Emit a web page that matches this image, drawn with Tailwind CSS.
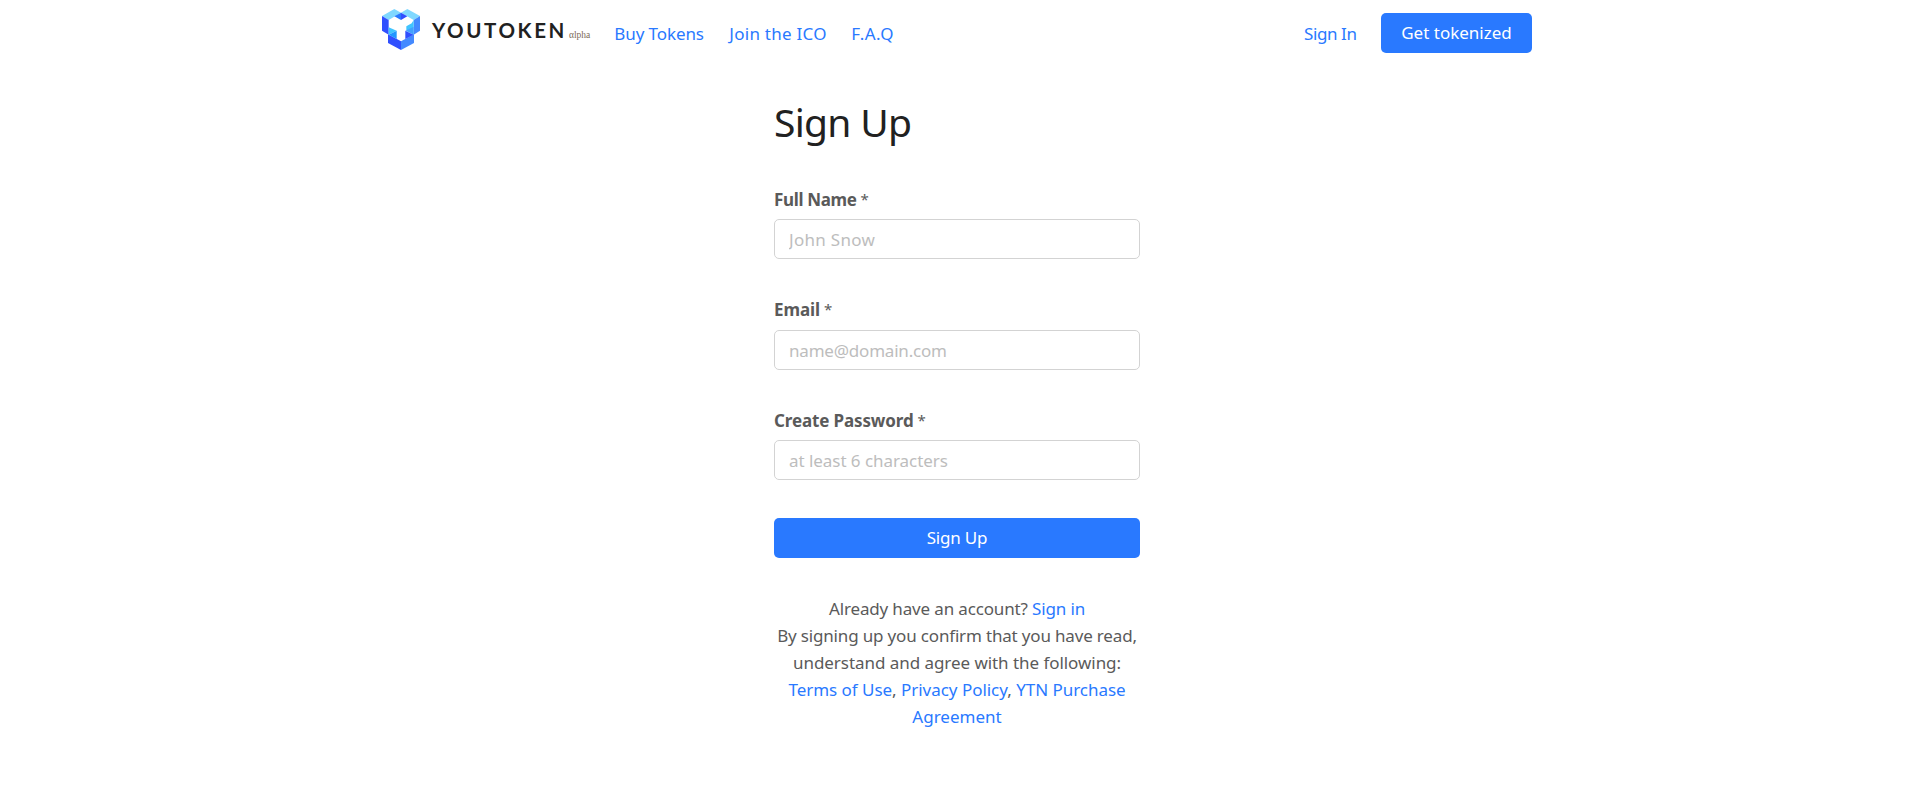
<!DOCTYPE html>
<html lang="en">
<head>
    <meta charset="UTF-8">
    <meta name="viewport" content="width=device-width, initial-scale=1.0">
    <title>YouToken - Sign Up</title>
    <script src="https://cdn.jsdelivr.net/npm/@tailwindcss/browser@4"></script>
</head>
<body class="min-h-screen bg-white font-['Noto_Sans',sans-serif] text-[17px] leading-[27px] text-[#5a5a5a]">
    <header class="mx-auto flex h-[66px] w-[1150px] items-start">
        <a href="#" class="flex items-start">
            <svg class="mt-[9px] h-[41px] w-[38px]" viewBox="30 27 114 123">
                <!-- top faces -->
                <path fill="#80d8ff" d="M30 48 67 27 87 38 50 60zM144 48 106 27 87 38 125 60z"/>
                <!-- outer side faces -->
                <path fill="#304ffe" d="M30 48 50 60V104L30 92z"/>
                <path fill="#448aff" d="M144 48 125 60V104L144 92z"/>
                <path fill="#304ffe" d="M48 103 87 124V150L48 129z"/>
                <path fill="#448aff" d="M126 103 87 124V150L126 129z"/>
                <!-- inner faces -->
                <path fill="#2979ff" d="M67 49 87 38V60z"/>
                <path fill="#304ffe" d="M106 49 87 38V60z"/>
                <path fill="#40c4ff" d="M125 60V104L103 92V79L119 70z"/>
                <path fill="#40c4ff" d="M50 82V104L74 92z"/>
                <path fill="#2196ff" d="M50 104 74 92V117z"/>
                <path fill="#304ffe" d="M100 92V117L125 104z"/>
                <path fill="#448aff" d="M100 92 125 80V104z" opacity=".6"/>
            </svg>
            <span class="mt-3 ml-3 w-[137px] whitespace-nowrap font-['Lato',sans-serif] text-[20.5px] leading-[36px] font-bold tracking-[2.6px] text-[#212121]">YOUTOKEN</span>
            <span class="mt-[25px] font-['Liberation_Serif',serif] text-[9.5px] leading-[20px] text-[#7d6a58]">αlpha</span>
        </a>
        <nav class="mt-5 ml-6 flex text-[#2979ff]">
            <a href="#" class="w-[115px] tracking-[-0.1px]">Buy Tokens</a>
            <a href="#" class="w-[122px] tracking-[0.25px]">Join the ICO</a>
            <a href="#" class="tracking-[0.5px]">F.A.Q</a>
        </nav>
        <div class="ml-auto flex items-start">
            <a href="#" class="mt-5 w-[77px] tracking-[-0.4px] text-[#2979ff]">Sign In</a>
            <a href="#" class="mt-[13px] flex h-10 w-[151px] items-center justify-center rounded-[5px] bg-[#2979ff] pb-0.5 text-white">Get tokenized</a>
        </div>
    </header>

    <main class="mx-auto w-[366px] pt-[33px]">
        <h1 class="text-[39px] leading-[46px] tracking-[-0.7px] text-[#212121]">Sign Up</h1>

        <form class="mt-[41px]">
            <div class="h-[110px]">
                <label for="name" class="flex gap-1"><span class="font-bold tracking-[-0.35px]">Full Name</span><span class="text-[15px]">*</span></label>
                <input id="name" type="text" placeholder="John Snow" class="mt-1.5 block h-10 w-full rounded-[5px] border border-[#d3d3d3] px-3.5 tracking-[0.3px] placeholder:text-[#bdbdbd]">
            </div>
            <div class="h-[111px]">
                <label for="email" class="flex gap-1"><span class="font-bold tracking-[-0.1px]">Email</span><span class="text-[15px]">*</span></label>
                <input id="email" type="email" placeholder="name@domain.com" class="mt-[7px] block h-10 w-full rounded-[5px] border border-[#d3d3d3] px-3.5 tracking-[-0.2px] placeholder:text-[#bdbdbd]">
            </div>
            <div class="h-[111px]">
                <label for="password" class="flex gap-1"><span class="font-bold tracking-[-0.13px]">Create Password</span><span class="text-[15px]">*</span></label>
                <input id="password" type="password" placeholder="at least 6 characters" class="mt-1.5 block h-10 w-full rounded-[5px] border border-[#d3d3d3] px-3.5 tracking-[-0.05px] placeholder:text-[#bdbdbd]">
            </div>
            <button type="submit" class="block h-10 w-full rounded-[5px] bg-[#2979ff] pb-0.5 tracking-[-0.2px] text-white">Sign Up</button>
        </form>

        <div class="mt-[37px] text-center whitespace-nowrap">
            <p class="tracking-[-0.15px]">Already have an account? <a href="#" class="text-[#2979ff]">Sign in</a></p>
            <p class="tracking-[-0.17px]">By signing up you confirm that you have read,</p>
            <p class="tracking-[-0.05px]">understand and agree with the following:</p>
            <p class="tracking-[-0.03px]"><a href="#" class="text-[#2979ff]">Terms of Use</a>, <a href="#" class="text-[#2979ff]">Privacy Policy</a>, <a href="#" class="text-[#2979ff]">YTN Purchase</a></p>
            <p><a href="#" class="text-[#2979ff]">Agreement</a></p>
        </div>
    </main>
</body>
</html>
